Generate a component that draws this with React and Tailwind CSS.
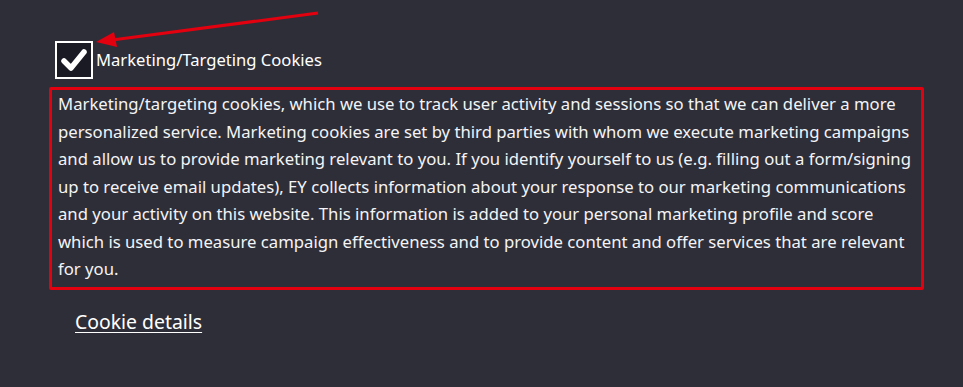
import React from 'react';

const lines = [
  'Marketing/targeting cookies, which we use to track user activity and sessions so that we can deliver a more',
  'personalized service. Marketing cookies are set by third parties with whom we execute marketing campaigns',
  'and allow us to provide marketing relevant to you. If you identify yourself to us (e.g. filling out a form/signing',
  'up to receive email updates), EY collects information about your response to our marketing communications',
  'and your activity on this website. This information is added to your personal marketing profile and score',
  'which is used to measure campaign effectiveness and to provide content and offer services that are relevant',
  'for you.',
];

const App = () => {
  return (
    <div
      className="relative w-[963px] h-[387px] bg-[#2e2e38] text-white overflow-hidden"
      style={{ fontFamily: '"Noto Sans", "Open Sans", sans-serif' }}
    >
      {/* annotation arrow */}
      <svg className="absolute left-0 top-0" width="963" height="387">
        <line x1="318" y1="13" x2="112" y2="40" stroke="#e3000f" strokeWidth="3" />
        <polygon points="96,42 114,32 117,47" fill="#e3000f" />
      </svg>

      <div className="pt-[41px] pl-[55px] flex items-center">
        <div className="w-[38px] h-[38px] border-2 border-white bg-[#1a1a24] flex items-center justify-center">
          <svg width="26" height="24" viewBox="0 0 26 24">
            <path d="M3 13 L10 20 L23 4" fill="none" stroke="#fff" strokeWidth="5.5" strokeLinecap="round" strokeLinejoin="round" />
          </svg>
        </div>
        <span className="ml-[3px] text-[16.6px] leading-none">Marketing/Targeting Cookies</span>
      </div>

      <div className="ml-[49px] mt-[8px] w-[875px] border-[3px] border-[#e3000f] rounded-[2px] pl-[6px] pr-[6px] pt-0 pb-[4px]">
        <p className="text-[16.7px] leading-[27.5px] text-[#f4f4f6] whitespace-nowrap">
          {lines.map((l, i) => (
            <span key={i} className="block">{l}</span>
          ))}
        </p>
      </div>

      <div className="pl-[75px] mt-[17px]">
        <a className="text-[19.4px] underline underline-offset-[3px] text-white">Cookie details</a>
      </div>
    </div>
  );
};

export default App;
